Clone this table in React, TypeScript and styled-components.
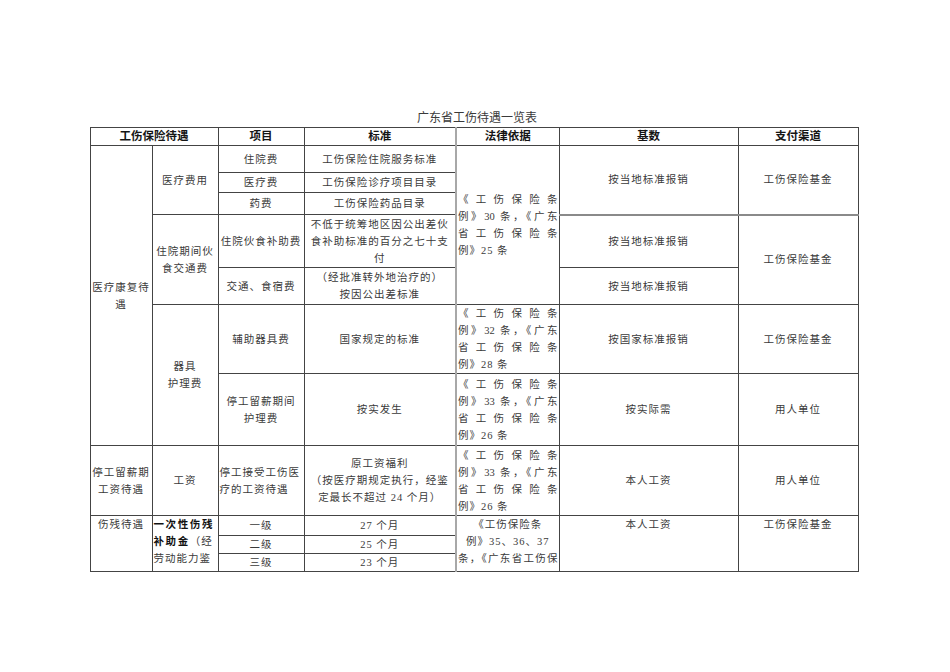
import React from 'react';
import styled, { createGlobalStyle } from 'styled-components';

const GlobalStyle = createGlobalStyle`
    html, body {
        margin: 0;
        padding: 0;
        background: #ffffff;
    }
    body {
        font-family: "Liberation Serif", "Noto Sans CJK SC", serif;
        color: #333333;
    }
`;

const Page = styled.div`
    width: 950px;
    padding-top: 110px;
    display: flex;
    flex-direction: column;
    align-items: flex-start;
`;

const Sheet = styled.div`
    margin-left: 90px;
    width: 768px;
    display: flex;
    flex-direction: column;
    align-items: center;
`;

const Title = styled.div`
    font-size: 12px;
    line-height: 17px;
    font-weight: 400;
    color: #3a3a3a;
    padding-left: 6px;
`;

const Table = styled.table`
    width: 768px;
    border-collapse: collapse;
    table-layout: fixed;
    border: 1px solid #444444;
`;

const Head = styled.th<{ $grey?: boolean }>`
    border: 1px solid #444444;
    border-left: ${(p) => (p.$grey ? '2px solid #a8a8a8' : '1px solid #444444')};
    font-size: 11.5px;
    font-weight: 700;
    line-height: 17px;
    padding: 0;
    text-align: center;
    vertical-align: middle;
    color: #151515;
`;

const Cell = styled.td<{ $align?: string; $valign?: string; $grey?: boolean; $softBottom?: boolean }>`
    border: 1px solid #444444;
    border-left: ${(p) => (p.$grey ? '2px solid #a8a8a8' : '1px solid #444444')};
    border-bottom: ${(p) => (p.$softBottom ? '2px solid #8a8a8a' : '1px solid #444444')};
    font-size: 10.5px;
    letter-spacing: 1px;
    line-height: 17px;
    padding: 0 1px;
    text-align: ${(p) => p.$align || 'center'};
    vertical-align: ${(p) => p.$valign || 'middle'};
    overflow: hidden;
    color: #3a3a3a;
`;

const Row = styled.tr<{ $h: number }>`
    height: ${(p) => p.$h}px;
`;

const Line = styled.span<{ $spread?: boolean; $align?: string }>`
    display: block;
    text-align: ${(p) => (p.$spread ? 'justify' : p.$align || 'left')};
    text-align-last: ${(p) => (p.$spread ? 'justify' : p.$align || 'left')};
    letter-spacing: ${(p) => (p.$spread ? '0' : '1px')};
`;

const Strong = styled.b`
    font-weight: 700;
    letter-spacing: 1.6px;
    color: #111111;
`;

type LawProps = { lines: string[] };

const Law = ({ lines }: LawProps) => (
    <>
        {lines.map((l, i) => (
            <Line key={i} $spread={i < lines.length - 1}>{l}</Line>
        ))}
    </>
);

const App = () => {
    return (
        <Page>
            <GlobalStyle />
            <Sheet>
                <Title>广东省工伤待遇一览表</Title>
                <Table>
                    <colgroup>
                        <col style={{ width: 62 }} />
                        <col style={{ width: 66 }} />
                        <col style={{ width: 86 }} />
                        <col style={{ width: 152 }} />
                        <col style={{ width: 103 }} />
                        <col style={{ width: 179 }} />
                        <col style={{ width: 120 }} />
                    </colgroup>
                    <tbody>
                        <Row $h={18}>
                            <Head colSpan={2}>工伤保险待遇</Head>
                            <Head>项目</Head>
                            <Head>标准</Head>
                            <Head $grey>法律依据</Head>
                            <Head>基数</Head>
                            <Head>支付渠道</Head>
                        </Row>
                        <Row $h={27}>
                            <Cell rowSpan={7}>医疗康复待遇</Cell>
                            <Cell rowSpan={3}>医疗费用</Cell>
                            <Cell>住院费</Cell>
                            <Cell>工伤保险住院服务标准</Cell>
                            <Cell rowSpan={5} $grey>
                                <Law lines={['《工伤保险条', '例》30 条，《广东', '省工伤保险条', '例》25 条']} />
                            </Cell>
                            <Cell rowSpan={3} $softBottom>按当地标准报销</Cell>
                            <Cell rowSpan={3} $softBottom>工伤保险基金</Cell>
                        </Row>
                        <Row $h={20}>
                            <Cell>医疗费</Cell>
                            <Cell>工伤保险诊疗项目目录</Cell>
                        </Row>
                        <Row $h={22}>
                            <Cell>药费</Cell>
                            <Cell>工伤保险药品目录</Cell>
                        </Row>
                        <Row $h={53}>
                            <Cell rowSpan={2}>住院期间伙食交通费</Cell>
                            <Cell>住院伙食补助费</Cell>
                            <Cell>
                                不低于统筹地区因公出差伙<br />食补助标准的百分之七十支<br />付
                            </Cell>
                            <Cell>按当地标准报销</Cell>
                            <Cell rowSpan={2}>工伤保险基金</Cell>
                        </Row>
                        <Row $h={37}>
                            <Cell>交通、食宿费</Cell>
                            <Cell>
                                （经批准转外地治疗的）<br />按因公出差标准
                            </Cell>
                            <Cell>按当地标准报销</Cell>
                        </Row>
                        <Row $h={69}>
                            <Cell rowSpan={2}>
                                器具<br />护理费
                            </Cell>
                            <Cell>辅助器具费</Cell>
                            <Cell>国家规定的标准</Cell>
                            <Cell $grey>
                                <Law lines={['《工伤保险条', '例》32 条，《广东', '省工伤保险条', '例》28 条']} />
                            </Cell>
                            <Cell>按国家标准报销</Cell>
                            <Cell>工伤保险基金</Cell>
                        </Row>
                        <Row $h={72}>
                            <Cell>
                                停工留薪期间<br />护理费
                            </Cell>
                            <Cell>按实发生</Cell>
                            <Cell $grey>
                                <Law lines={['《工伤保险条', '例》33 条，《广东', '省工伤保险条', '例》26 条']} />
                            </Cell>
                            <Cell>按实际需</Cell>
                            <Cell>用人单位</Cell>
                        </Row>
                        <Row $h={70}>
                            <Cell>
                                停工留薪期<br />工资待遇
                            </Cell>
                            <Cell>工资</Cell>
                            <Cell $align="left">
                                停工接受工伤医<br />疗的工资待遇
                            </Cell>
                            <Cell>
                                原工资福利<br />（按医疗期规定执行，经鉴<br />定最长不超过 24 个月）
                            </Cell>
                            <Cell $grey>
                                <Law lines={['《工伤保险条', '例》33 条，《广东', '省工伤保险条', '例》26 条']} />
                            </Cell>
                            <Cell>本人工资</Cell>
                            <Cell>用人单位</Cell>
                        </Row>
                        <Row $h={20}>
                            <Cell rowSpan={3} $valign="top">伤残待遇</Cell>
                            <Cell rowSpan={3} $valign="top" $align="left">
                                <Strong>一次性伤残</Strong>
                                <br />
                                <Strong>补助金</Strong>（经<br />劳动能力鉴
                            </Cell>
                            <Cell>一级</Cell>
                            <Cell>27 个月</Cell>
                            <Cell rowSpan={3} $valign="top" $grey>
                                <Line $align="center">《工伤保险条</Line>
                                <Line $align="center">例》35、36、37</Line>
                                <Line $spread>条，《广东省工伤保</Line>
                            </Cell>
                            <Cell rowSpan={3} $valign="top">本人工资</Cell>
                            <Cell rowSpan={3} $valign="top">工伤保险基金</Cell>
                        </Row>
                        <Row $h={18}>
                            <Cell>二级</Cell>
                            <Cell>25 个月</Cell>
                        </Row>
                        <Row $h={17}>
                            <Cell>三级</Cell>
                            <Cell>23 个月</Cell>
                        </Row>
                    </tbody>
                </Table>
            </Sheet>
        </Page>
    );
};

export default App;
